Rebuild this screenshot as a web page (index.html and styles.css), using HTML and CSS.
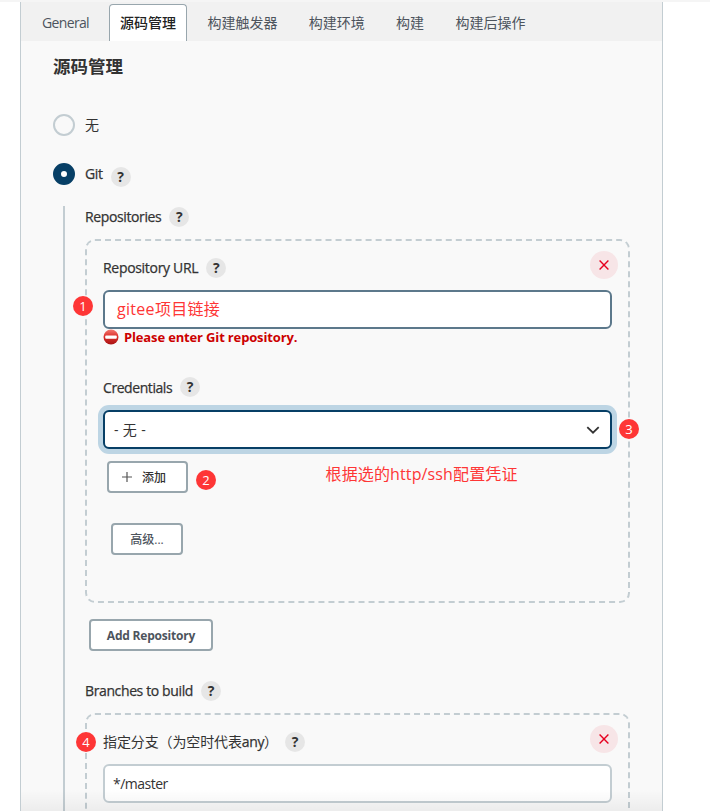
FILE: index.html
```html
<!DOCTYPE html>
<html lang="zh-CN">
<head>
<meta charset="utf-8">
<title>源码管理</title>
<link rel="stylesheet" href="styles.css">
</head>
<body>
<main class="panel">
  <nav class="tabs">
    <a class="tab tab-general">General</a>
    <a class="tab active">源码管理</a>
    <a class="tab">构建触发器</a>
    <a class="tab">构建环境</a>
    <a class="tab">构建</a>
    <a class="tab">构建后操作</a>
  </nav>
  <div class="content">
    <h1>源码管理</h1>
    <div class="option"><span class="radio"></span><span>无</span></div>
    <div class="option option-git"><span class="radio checked"></span><span class="latin">Git</span><span class="help">?</span></div>
    <section class="nested">
      <div class="label"><span class="latin">Repositories</span><span class="help">?</span></div>
      <div class="box box-repo">
        <div class="box-head">
          <div class="label"><span class="latin t-url">Repository URL</span><span class="help">?</span></div>
          <button class="remove"><svg width="12" height="12" viewBox="0 0 12 12"><path d="M1.6 1.6l8.8 8.8M10.4 1.6l-8.8 8.8"/></svg></button>
        </div>
        <div class="input input-url"><span class="t-gitee">gitee项目链接</span><i class="mark mark-1">1</i></div>
        <div class="error">
          <svg width="16" height="16" viewBox="0 0 16 16"><defs><linearGradient id="stop" x2="0" y2="1"><stop offset="0" stop-color="#f47a72"/><stop offset=".45" stop-color="#dd302c"/><stop offset="1" stop-color="#a91414"/></linearGradient></defs><circle cx="8" cy="8" r="7.5" fill="url(#stop)"/><rect x="2.2" y="6.4" width="11.6" height="3.4" rx="1" fill="#fff"/></svg>
          <span class="t-error">Please enter Git repository.</span>
        </div>
        <div class="label label-cred"><span class="latin t-cred">Credentials</span><span class="help">?</span></div>
        <div class="input select"><span class="t-none">- 无 -</span><svg width="14" height="8" viewBox="0 0 14 8"><path d="M1.3 1.2L7 6.7l5.7-5.5"/></svg><i class="mark mark-3">3</i></div>
        <div class="add-row">
          <button class="button add"><svg width="10" height="10" viewBox="0 0 10 10"><path d="M5 0v10M0 5h10"/></svg><span>添加</span></button>
          <i class="mark mark-2">2</i>
          <span class="note">根据选的http/ssh配置凭证</span>
        </div>
        <button class="button advanced">高级...</button>
      </div>
      <button class="button add-repo"><span class="t-add">Add Repository</span></button>
      <div class="label label-branches"><span class="latin">Branches to build</span><span class="help">?</span></div>
      <div class="box box-branch">
        <i class="mark mark-4">4</i>
        <div class="box-head">
          <div class="label"><span class="t-branch">指定分支（为空时代表<span class="latin">any</span>）</span><span class="help">?</span></div>
          <button class="remove"><svg width="12" height="12" viewBox="0 0 12 12"><path d="M1.6 1.6l8.8 8.8M10.4 1.6l-8.8 8.8"/></svg></button>
        </div>
        <div class="input input-branch"><span class="t-master">*/master</span></div>
      </div>
    </section>
  </div>
</main>
</body>
</html>
```
FILE: styles.css
```css
* { box-sizing: border-box; }
html, body { height: 811px; overflow: hidden; }
body {
  margin: 0;
  border-top: 2px solid #f5f5f5;
  background: #fff;
  color: #333;
  font: 14px/20px "Open Sans", "Noto Sans CJK SC", sans-serif;
}
button { font: inherit; padding: 0; }
.panel {
  position: relative;
  width: 643px;
  height: 809px;
  margin-left: 20px;
  border: solid #c3cdd2;
  border-width: 0 1px;
  background: #f9f9f9;
  overflow: hidden;
}
.panel::after {
  content: "";
  position: absolute;
  inset: auto 0 0 0;
  height: 22px;
  background: linear-gradient(transparent, rgba(0, 0, 0, .05));
}
.tabs {
  display: flex;
  height: 39px;
  padding: 2px 0 0 11px;
  background: #f1f1f1;
  color: #4d545d;
}
.tab { padding: 9px 10px 0; margin-right: 11.3px; white-space: nowrap; }
.tab-general { width: 66px; margin-right: 11px; letter-spacing: -.65px; }
.tab.active {
  width: 78px;
  margin-right: 11px;
  border: 1px solid #98a6ad;
  border-bottom: 0;
  border-radius: 4px 4px 0 0;
  background: #fff;
  color: #222;
  font-weight: 500;
  padding-top: 8px;
}
.content { padding: 13px 32px 0; }
.tab.active + .tab { margin-left: -.5px; }
h1 { margin: 0 0 37px; font-size: 17.5px; line-height: 24px; font-weight: 700; }
.option { display: flex; align-items: center; height: 20px; margin-bottom: 29px; gap: 10px; }
.option-git { margin-bottom: 22px; }
.radio { flex: none; width: 22px; height: 22px; border: 2px solid #c3cdd2; border-radius: 50%; }
.radio.checked { border: 8px solid #073f66; background: #fff; }
.latin { letter-spacing: -.38px; -webkit-text-stroke: .25px currentColor; }
.help {
  display: inline-flex;
  align-items: center;
  justify-content: center;
  width: 20px;
  height: 20px;
  border-radius: 50%;
  background: #e6e6e6;
  font-size: 14px;
  font-weight: 700;
}
.option .help { margin: 6px 0 0 -2px; }
.nested { margin-left: 10px; padding-left: 20px; border-left: 2px solid #c3cdd2; height: 620px; }
.label { display: flex; align-items: center; height: 22px; gap: 8px; white-space: nowrap; }
.t-url { letter-spacing: -.31px; }
.t-cred { letter-spacing: -.43px; }
.t-branch { width: 174px; letter-spacing: -.12px; }
.box { position: relative; width: 545px; border: 2px dashed #c3cdd2; border-radius: 10px; padding: 10px 16px 0; }
.box-repo { height: 364px; margin-top: 11px; }
.box-head { display: flex; justify-content: space-between; width: 515px; height: 39px; }
.box-head .label { margin-top: 6px; }
.remove {
  display: grid;
  place-items: center;
  width: 28px;
  height: 28px;
  border: 0;
  border-radius: 50%;
  background: #f7e5e7;
}
.remove path { fill: none; stroke: #e6001f; stroke-width: 1.4; }
.input {
  position: relative;
  display: flex;
  align-items: center;
  width: 509px;
  height: 39px;
  padding: 0 8px;
  border: 2px solid #c3cdd2;
  border-radius: 6px;
  background: #fff;
}
.input-url { border-color: #5c788b; padding-left: 12px; color: #fe3636; font-size: 16px; }
.t-gitee { margin-top: -2px; letter-spacing: .3px; }
.t-none { letter-spacing: .35px; padding-left: 1px; }
.t-master { letter-spacing: -.5px; }
.error { display: flex; align-items: center; gap: 5px; height: 16px; color: #c00; font-size: 13px; font-weight: 700; white-space: nowrap; }
.t-error { letter-spacing: -.15px; margin-top: -1px; }
.label-cred { margin-top: 31px; }
.label-cred .latin { padding-top: 1px; }
.select { margin-top: 12px; justify-content: space-between; padding-right: 10px; border-color: #073f66; box-shadow: 0 0 0 5px #bdd5e4; }
.select path { fill: none; stroke: #333; stroke-width: 1.8; }
.add-row { display: flex; align-items: flex-start; height: 74px; padding: 12px 0 0 4px; }
.button {
  display: flex;
  align-items: center;
  justify-content: center;
  height: 32px;
  border: 2px solid #98a6ad;
  border-radius: 4px;
  background: #fff;
  color: #4d545d;
  font-size: 12px;
  font-weight: 700;
}
.button span { padding-top: 1px; }
.add { width: 81px; gap: 10px; padding-right: 7px; color: #333; font-weight: 500; }
.add path { fill: none; stroke: #555; stroke-width: 1.2; }
.note { margin: 3px 0 0 109.5px; color: #fe3636; font-size: 16px; letter-spacing: .13px; white-space: nowrap; }
.advanced { width: 72px; margin-left: 8px; padding-top: 1px; font-weight: 500; }
.add-repo { width: 124px; margin: 16px 0 0 4px; }
.t-add { letter-spacing: -.2px; }
.label-branches { margin-top: 29px; }
.box-branch { height: 130px; margin-top: 11px; }
.mark {
  display: flex;
  align-items: center;
  justify-content: center;
  flex: none;
  width: 20px;
  height: 20px;
  border-radius: 50%;
  background: #fe3636;
  color: #fff;
  font-size: 13px;
  font-style: normal;
  font-weight: 400;
  line-height: 18px;
  padding-bottom: 1px;
}
.mark-1 { position: absolute; left: -32px; top: 4px; }
.mark-2 { margin: 9px 0 0 8px; }
.mark-3 { position: absolute; left: 514px; top: 7px; }
.mark-4 { position: absolute; left: -11px; top: 17px; }
```
